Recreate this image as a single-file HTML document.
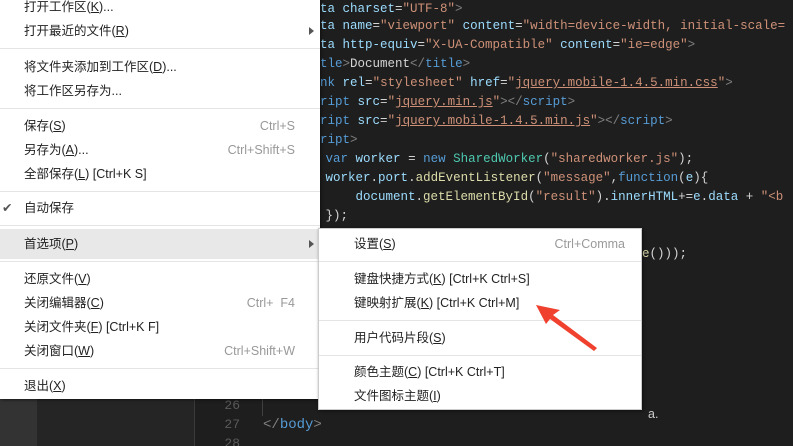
<!DOCTYPE html>
<html style="width:793px;height:446px;overflow:hidden"><head><meta charset="utf-8"><style>
*{margin:0;padding:0;box-sizing:border-box}
body{width:793px;height:446px;overflow:hidden;background:#1e1e1e;position:relative;font-family:"Liberation Sans","Noto Sans CJK SC",sans-serif}
.ab{position:absolute;left:0;top:0;width:37px;height:446px;background:#333}
.sb{position:absolute;left:37px;top:0;width:158px;height:446px;background:#252526;border-right:1px solid #3a3a3a}
.code{position:absolute;left:0;top:0;width:793px;height:446px;overflow:hidden;font-family:"Liberation Mono",monospace;font-size:12.5px;color:#d4d4d4;white-space:pre}
.code div{position:absolute;height:19px;line-height:19px}
.t{color:#569cd6}.a{color:#9cdcfe}.s{color:#ce9178}.g{color:#808080}.f{color:#dcdcaa}.c{color:#4ec9b0}
.u{text-decoration:underline;text-decoration-color:#ce9178}
.ln{position:absolute;font-family:"Liberation Mono",monospace;font-size:13px;color:#5a5a5a;width:30px;text-align:right;left:210px}
.menu{position:absolute;background:#fff;font-size:12.5px;color:#222;box-shadow:1px 1px 3px rgba(0,0,0,.5)}
.it{position:absolute;left:0;right:0;height:24px;line-height:24px}
.it .l{position:absolute;left:24px}
.it .r{position:absolute;right:25px;color:#999}
.sep{position:absolute;left:0;right:0;height:1px;background:#e4e4e4}
.arr{position:absolute;right:6px;top:8px;width:0;height:0;border-left:5px solid #555;border-top:4px solid transparent;border-bottom:4px solid transparent}
</style></head><body>
<div class="ab"></div><div class="sb"></div>
<div class="code">
<div style="left:320px;top:0"><span class="a">ta charset</span>=<span class="s">"UTF-8"</span><span class="g">&gt;</span></div>
<div style="left:320px;top:17px"><span class="a">ta name</span>=<span class="s">"viewport"</span> <span class="a">content</span>=<span class="s">"width=device-width, initial-scale=</span></div>
<div style="left:320px;top:36px"><span class="a">ta http-equiv</span>=<span class="s">"X-UA-Compatible"</span> <span class="a">content</span>=<span class="s">"ie=edge"</span><span class="g">&gt;</span></div>
<div style="left:320px;top:55px"><span class="t">tle</span><span class="g">&gt;</span>Document<span class="g">&lt;/</span><span class="t">title</span><span class="g">&gt;</span></div>
<div style="left:320px;top:74px"><span class="t">nk</span> <span class="a">rel</span>=<span class="s">"stylesheet"</span> <span class="a">href</span>=<span class="s">"<span class="u">jquery.mobile-1.4.5.min.css</span>"</span><span class="g">&gt;</span></div>
<div style="left:320px;top:93px"><span class="t">ript</span> <span class="a">src</span>=<span class="s">"<span class="u">jquery.min.js</span>"</span><span class="g">&gt;&lt;/</span><span class="t">script</span><span class="g">&gt;</span></div>
<div style="left:320px;top:112px"><span class="t">ript</span> <span class="a">src</span>=<span class="s">"<span class="u">jquery.mobile-1.4.5.min.js</span>"</span><span class="g">&gt;&lt;/</span><span class="t">script</span><span class="g">&gt;</span></div>
<div style="left:320px;top:131px"><span class="t">ript</span><span class="g">&gt;</span></div>
<div style="left:318px;top:150px"> <span class="t">var</span> <span class="a">worker</span> = <span class="t">new</span> <span class="c">SharedWorker</span>(<span class="s">"sharedworker.js"</span>);</div>
<div style="left:318px;top:169px"> <span class="a">worker</span>.<span class="a">port</span>.<span class="f">addEventListener</span>(<span class="s">"message"</span>,<span class="t">function</span>(<span class="a">e</span>){</div>
<div style="left:318px;top:188px">     <span class="a">document</span>.<span class="f">getElementById</span>(<span class="s">"result"</span>).<span class="a">innerHTML</span>+=<span class="a">e</span>.<span class="a">data</span> + <span class="s">"&lt;b</span></div>
<div style="left:318px;top:207px"> });</div>
<div style="left:642px;top:245px"><span class="f">e</span>()));</div>
<div style="left:263px;top:416px;font-size:14px"><span class="g">&lt;/</span><span class="t">body</span><span class="g">&gt;</span></div>
<div style="left:648px;top:405px;color:#ccc;font-family:'Liberation Sans'">a.</div>
</div>
<div class="ln" style="top:398px">26</div>
<div class="ln" style="top:417px">27</div>
<div class="ln" style="top:436px">28</div>
<div style="position:absolute;left:262px;top:398px;width:1px;height:18px;background:#404040"></div>

<div class="menu" style="left:0;top:-5px;width:320px;height:404px">
<div class="it" style="top:0"><span class="l">打开工作区(<u>K</u>)...</span></div>
<div class="it" style="top:24px"><span class="l">打开最近的文件(<u>R</u>)</span><span class="arr"></span></div>
<div class="sep" style="top:53px"></div>
<div class="it" style="top:60px"><span class="l">将文件夹添加到工作区(<u>D</u>)...</span></div>
<div class="it" style="top:84px"><span class="l">将工作区另存为...</span></div>
<div class="sep" style="top:113px"></div>
<div class="it" style="top:119px"><span class="l">保存(<u>S</u>)</span><span class="r">Ctrl+S</span></div>
<div class="it" style="top:143px"><span class="l">另存为(<u>A</u>)...</span><span class="r">Ctrl+Shift+S</span></div>
<div class="it" style="top:167px"><span class="l">全部保存(<u>L</u>) [Ctrl+K S]</span></div>
<div class="sep" style="top:196px"></div>
<div class="it" style="top:201px"><span style="position:absolute;left:2px;color:#555">✔</span><span class="l">自动保存</span></div>
<div class="sep" style="top:230px"></div>
<div class="it" style="top:234px;height:30px;line-height:30px;background:#e8e8e8"><span class="l">首选项(<u>P</u>)</span><span class="arr" style="top:11px"></span></div>
<div class="sep" style="top:266px"></div>
<div class="it" style="top:272px"><span class="l">还原文件(<u>V</u>)</span></div>
<div class="it" style="top:296px"><span class="l">关闭编辑器(<u>C</u>)</span><span class="r">Ctrl+&nbsp; F4</span></div>
<div class="it" style="top:320px"><span class="l">关闭文件夹(<u>F</u>) [Ctrl+K F]</span></div>
<div class="it" style="top:344px"><span class="l">关闭窗口(<u>W</u>)</span><span class="r">Ctrl+Shift+W</span></div>
<div class="sep" style="top:373px"></div>
<div class="it" style="top:379px"><span class="l">退出(<u>X</u>)</span></div>
</div>

<div class="menu" style="left:318px;top:228px;width:324px;height:182px;border:1px solid #ccc">
<div class="it" style="top:3px"><span class="l" style="left:35px">设置(<u>S</u>)</span><span class="r" style="right:16px">Ctrl+Comma</span></div>
<div class="sep" style="top:32px"></div>
<div class="it" style="top:38px"><span class="l" style="left:35px">键盘快捷方式(<u>K</u>) [Ctrl+K Ctrl+S]</span></div>
<div class="it" style="top:62px"><span class="l" style="left:35px">键映射扩展(<u>K</u>) [Ctrl+K Ctrl+M]</span></div>
<div class="sep" style="top:91px"></div>
<div class="it" style="top:97px"><span class="l" style="left:35px">用户代码片段(<u>S</u>)</span></div>
<div class="sep" style="top:126px"></div>
<div class="it" style="top:131px"><span class="l" style="left:35px">颜色主题(<u>C</u>) [Ctrl+K Ctrl+T]</span></div>
<div class="it" style="top:155px"><span class="l" style="left:35px">文件图标主题(<u>I</u>)</span></div>
</div>
<svg style="position:absolute;left:530px;top:300px" width="80" height="60"><polygon points="6,5 30,10 23,15 67,48 64,51 20,19 16,24" fill="#f0412e"/></svg>
</body></html>
